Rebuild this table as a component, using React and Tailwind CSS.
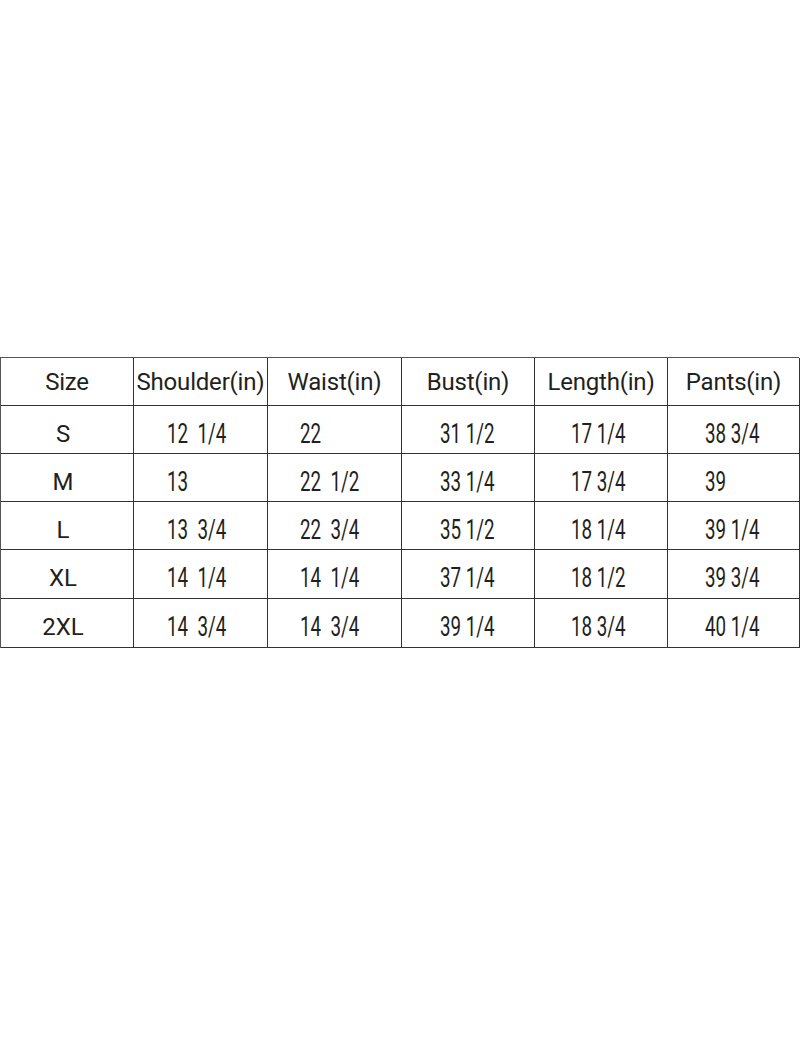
const headers = ["Size", "Shoulder(in)", "Waist(in)", "Bust(in)", "Length(in)", "Pants(in)"];

const rows = [
  ["S", "12  1/4", "22", "31 1/2", "17 1/4", "38 3/4"],
  ["M", "13", "22  1/2", "33 1/4", "17 3/4", "39"],
  ["L", "13  3/4", "22  3/4", "35 1/2", "18 1/4", "39 1/4"],
  ["XL", "14  1/4", "14  1/4", "37 1/4", "18 1/2", "39 3/4"],
  ["2XL", "14  3/4", "14  3/4", "39 1/4", "18 3/4", "40 1/4"],
];

// left offset of the values inside each column
const pads = ["", "pl-[33px]", "pl-[32px]", "pl-[38px]", "pl-[36px]", "pl-[37px]"];
const heights = ["h-[48px]", "h-[48px]", "h-[48px]", "h-[49px]", "h-[49px]"];

export default function App() {
  return (
    <main className="w-[800px] h-[1050px] bg-white pt-[357px] text-[#231f20] font-['Roboto',sans-serif]">
      <div className="w-[799px] grid grid-cols-[133px_134px_134px_133px_133px_132px] border-l border-t border-[#555]">
        {headers.map((h) => (
          <div key={h} className="h-[48px] border-r border-b border-[#333] flex items-center justify-center text-[24px] tracking-[-0.2px] whitespace-nowrap">
            {h}
          </div>
        ))}
        {rows.map((r, ri) =>
          r.map((v, ci) =>
            ci === 0 ? (
              <div key={ri + "-" + ci} className={`${heights[ri]} border-r border-b border-[#333] flex items-center justify-center pt-[8px] pr-[8px] text-[24px]`}>
                {v}
              </div>
            ) : (
              <div key={ri + "-" + ci} className={`${heights[ri]} ${pads[ci]} border-r border-b border-[#333] flex items-center pt-[8px]`}>
                <span className="inline-block origin-left scale-x-[0.67] text-[28px] whitespace-pre leading-none">{v}</span>
              </div>
            )
          )
        )}
      </div>
    </main>
  );
}
